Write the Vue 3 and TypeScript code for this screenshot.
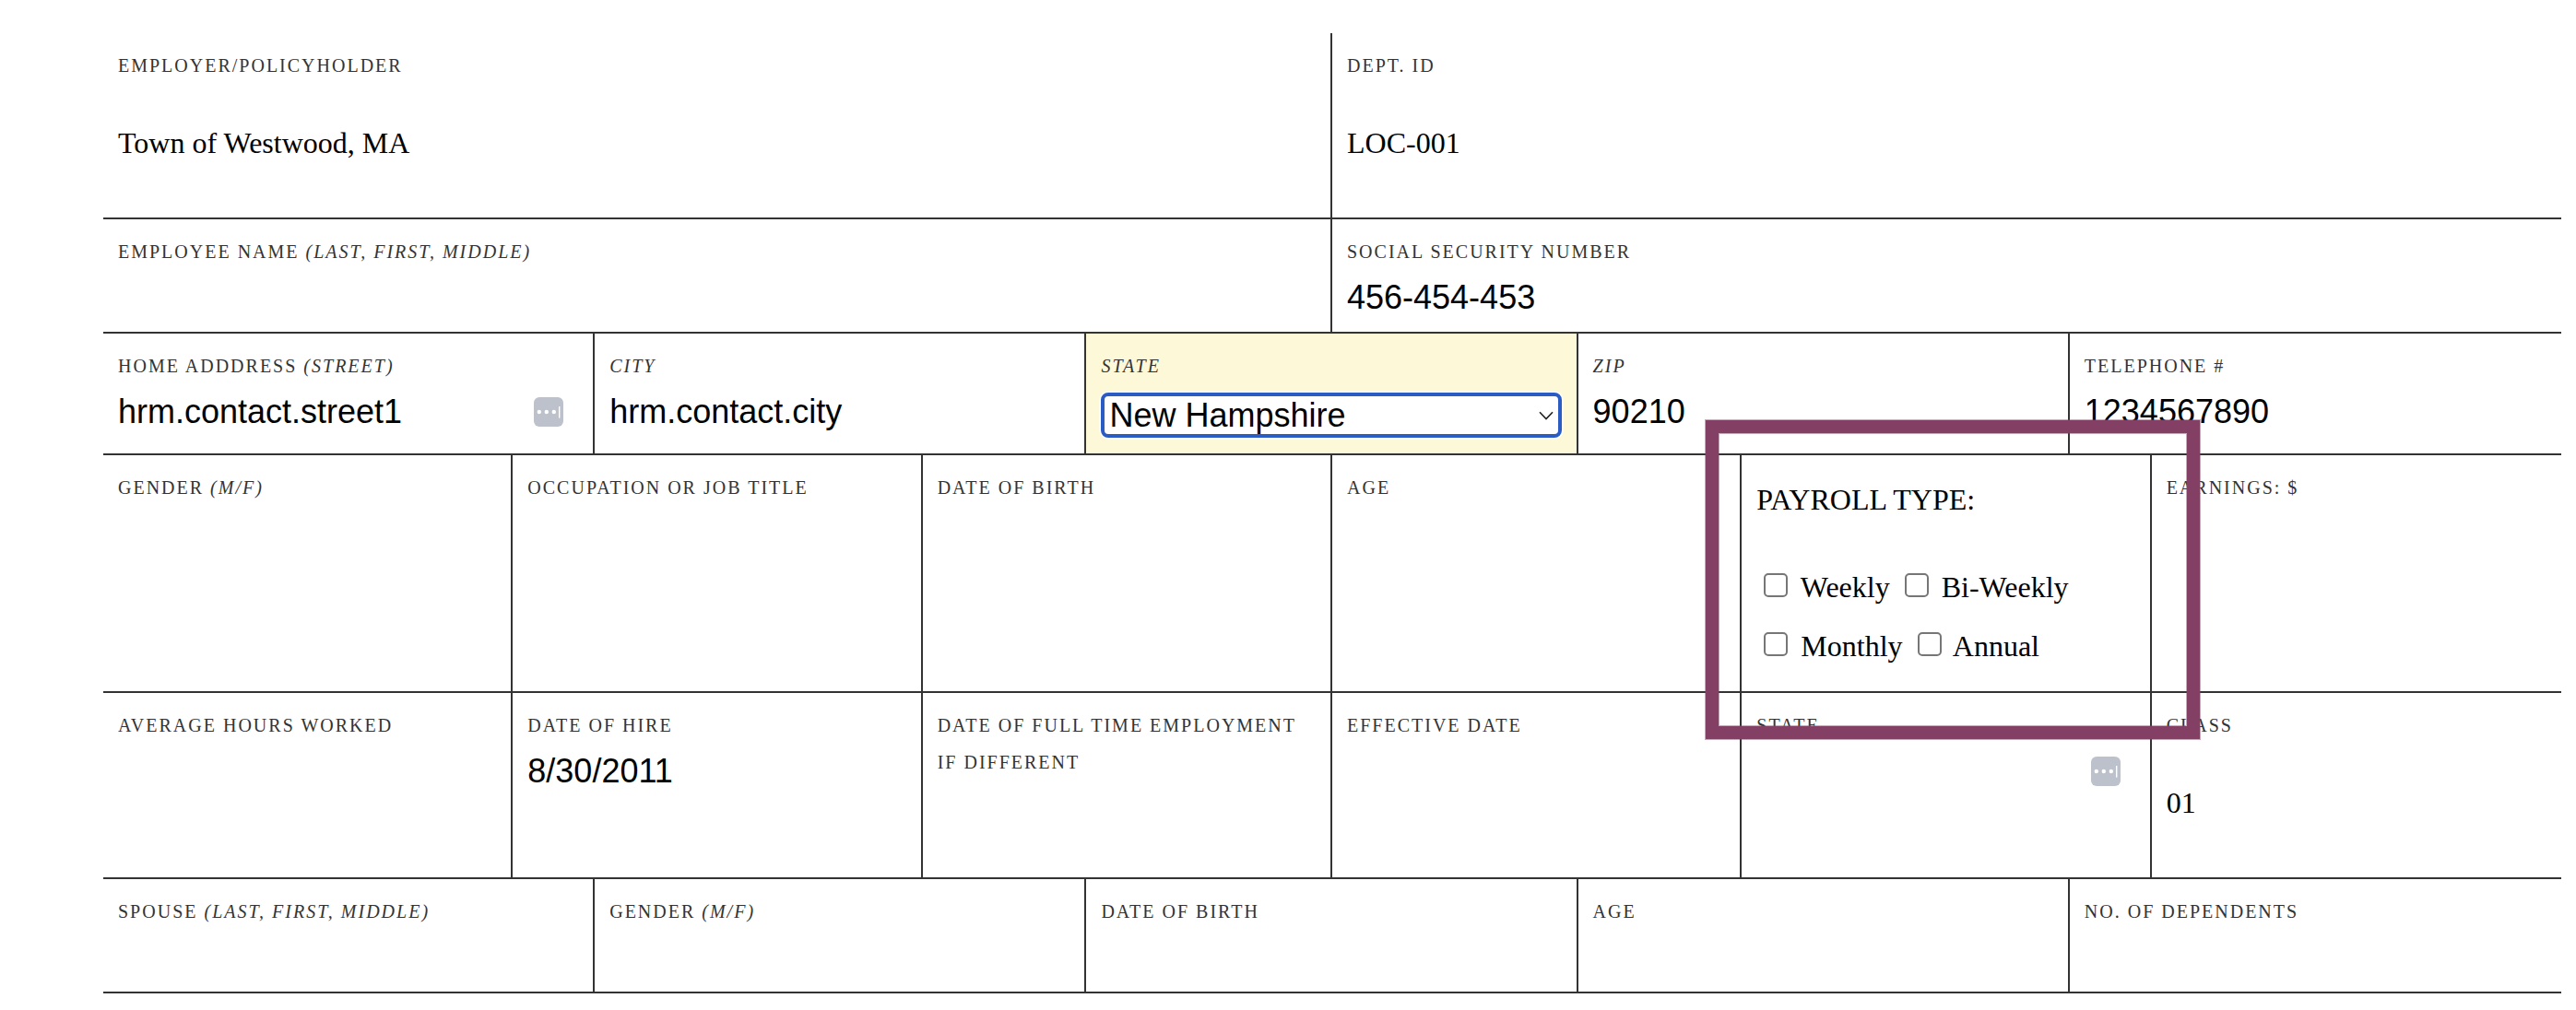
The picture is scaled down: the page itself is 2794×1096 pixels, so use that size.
<script setup lang="ts">
const states: string[] = ['Massachusetts', 'New Hampshire', 'Rhode Island', 'Vermont']
</script>

<template>
  <main class="page">
    <form class="form" @submit.prevent>
      <div class="row r1">
        <div class="cell">
          <div class="label">Employer/Policyholder</div>
          <div class="serif-value">Town of Westwood, MA</div>
        </div>
        <div class="cell">
          <div class="label">Dept. ID</div>
          <div class="serif-value">LOC-001</div>
        </div>
      </div>

      <div class="row r2">
        <div class="cell">
          <div class="label">Employee Name <em>(Last, First, Middle)</em></div>
        </div>
        <div class="cell">
          <div class="label">Social Security Number</div>
          <div class="value">456-454-453</div>
        </div>
      </div>

      <div class="row r3">
        <div class="cell">
          <div class="label">Home Adddress <em>(Street)</em></div>
          <div class="value">hrm.contact.street1</div>
          <svg class="badge" viewBox="0 0 32 32" aria-hidden="true">
            <rect width="32" height="32" rx="6" fill="#bcc1cc" />
            <circle cx="5.8" cy="16" r="2.2" fill="#fff" />
            <circle cx="13.8" cy="16" r="2.2" fill="#fff" />
            <circle cx="21.8" cy="16" r="2.2" fill="#fff" />
            <rect x="27" y="10" width="1.4" height="12.6" fill="#fff" />
          </svg>
        </div>
        <div class="cell">
          <div class="label"><em>City</em></div>
          <div class="value">hrm.contact.city</div>
        </div>
        <div class="cell highlight">
          <div class="label"><em>State</em></div>
          <div class="select-wrap">
            <select class="select">
              <option v-for="s in states" :key="s" :selected="s === 'New Hampshire'">{{ s }}</option>
            </select>
            <svg class="chevron" viewBox="0 0 16 10" aria-hidden="true">
              <path d="M1 1.2 L8 8.6 L15 1.2" fill="none" stroke="#222" stroke-width="1.6" />
            </svg>
          </div>
        </div>
        <div class="cell">
          <div class="label"><em>Zip</em></div>
          <div class="value">90210</div>
        </div>
        <div class="cell">
          <div class="label">Telephone #</div>
          <div class="value">1234567890</div>
        </div>
      </div>

      <div class="row r4">
        <div class="cell"><div class="label">Gender <em>(M/F)</em></div></div>
        <div class="cell"><div class="label">Occupation or Job Title</div></div>
        <div class="cell"><div class="label">Date of Birth</div></div>
        <div class="cell"><div class="label">Age</div></div>
        <div class="cell payroll">
          <div class="payroll-title">PAYROLL TYPE:</div>
          <div class="payroll-line">
            <input type="checkbox" class="check" /> Weekly <input type="checkbox" class="check" /> Bi-Weekly
          </div>
          <div class="payroll-line">
            <input type="checkbox" class="check" /> Monthly <input type="checkbox" class="check" /> Annual
          </div>
        </div>
        <div class="cell"><div class="label">Earnings: $</div></div>
      </div>

      <div class="row r5">
        <div class="cell"><div class="label">Average Hours Worked</div></div>
        <div class="cell">
          <div class="label">Date of Hire</div>
          <div class="value">8/30/2011</div>
        </div>
        <div class="cell"><div class="label">Date of Full Time Employment If Different</div></div>
        <div class="cell"><div class="label">Effective Date</div></div>
        <div class="cell">
          <div class="label">State</div>
          <svg class="badge" viewBox="0 0 32 32" aria-hidden="true">
            <rect width="32" height="32" rx="6" fill="#bcc1cc" />
            <circle cx="5.8" cy="16" r="2.2" fill="#fff" />
            <circle cx="13.8" cy="16" r="2.2" fill="#fff" />
            <circle cx="21.8" cy="16" r="2.2" fill="#fff" />
            <rect x="27" y="10" width="1.4" height="12.6" fill="#fff" />
          </svg>
        </div>
        <div class="cell">
          <div class="label">Class</div>
          <div class="serif-value">01</div>
        </div>
      </div>

      <div class="row r6">
        <div class="cell"><div class="label">Spouse <em>(Last, First, Middle)</em></div></div>
        <div class="cell"><div class="label">Gender <em>(M/F)</em></div></div>
        <div class="cell"><div class="label">Date of Birth</div></div>
        <div class="cell"><div class="label">Age</div></div>
        <div class="cell"><div class="label">No. of Dependents</div></div>
      </div>

      <div class="annotation" aria-hidden="true"></div>
    </form>
  </main>
</template>

<style>
html, body {
  margin: 0;
  background: #fff;
}
</style>

<style scoped>
.page {
  padding: 36px 16px 18px 112px;
  box-sizing: border-box;
  width: 2794px;
  height: 1096px;
  overflow: hidden;
  font-family: "Liberation Serif", "Times New Roman", serif;
  color: #000;
}
.form {
  position: relative;
  width: 2666px;
}
.row {
  display: grid;
  grid-auto-flow: column;
  grid-auto-columns: minmax(0, 1fr);
  box-sizing: border-box;
  border-bottom: 2px solid #333;
}
.r1, .r5 { height: 202px; }
.r2, .r6 { height: 124px; }
.r3 { height: 132px; }
.r4 { height: 258px; }
.cell {
  position: relative;
  min-width: 0;
  box-sizing: border-box;
  padding: 15px 16px 0 16px;
  border-right: 2px solid #333;
}
.cell:last-child {
  border-right: 0;
}
.label {
  margin-bottom: 1px;
  font-size: 20px;
  line-height: 40px;
  letter-spacing: 2px;
  text-transform: uppercase;
  color: #333;
}
.label em {
  font-style: italic;
}
.value {
  margin-top: 9px;
  font-family: "Liberation Sans", Arial, sans-serif;
  font-size: 36px;
  line-height: 41px;
}
.serif-value {
  margin-top: 46px;
  font-size: 32px;
  line-height: 37px;
}
.highlight {
  background: #fdf8d7;
}
.badge {
  position: absolute;
  top: 69px;
  right: 32px;
  width: 32px;
  height: 32px;
}
.select-wrap {
  position: relative;
  margin-top: 9px;
}
.select {
  display: block;
  width: 100%;
  height: 49px;
  box-sizing: border-box;
  appearance: none;
  padding: 0 30px 0 5px;
  border: 4px solid #2a5cc4;
  border-radius: 8px;
  outline: 0;
  box-shadow: 0 0 0 1.5px #fff;
  background: #fff;
  color: #000;
  font-family: "Liberation Sans", Arial, sans-serif;
  font-size: 36px;
}
.chevron {
  position: absolute;
  top: 20px;
  right: 9px;
  width: 16px;
  height: 10px;
  pointer-events: none;
}
.payroll-title {
  margin-top: 1px;
  font-size: 32px;
  line-height: 64px;
}
.payroll-title + .payroll-line {
  margin-top: 31px;
}
.payroll-line {
  font-size: 32px;
  line-height: 64px;
  white-space: nowrap;
}
.check {
  appearance: none;
  box-sizing: border-box;
  width: 26px;
  height: 26px;
  margin: 0 6px 0 8px;
  border: 2px solid #767676;
  border-radius: 5px;
  background: #fff;
}
.annotation {
  position: absolute;
  left: 1738px;
  top: 420px;
  width: 536px;
  height: 346px;
  box-sizing: border-box;
  border: 14px solid #844064;
  box-shadow: 0 0 0 1px rgba(132, 64, 100, 0.45), inset 0 0 0 1px rgba(132, 64, 100, 0.45);
  pointer-events: none;
}
</style>
